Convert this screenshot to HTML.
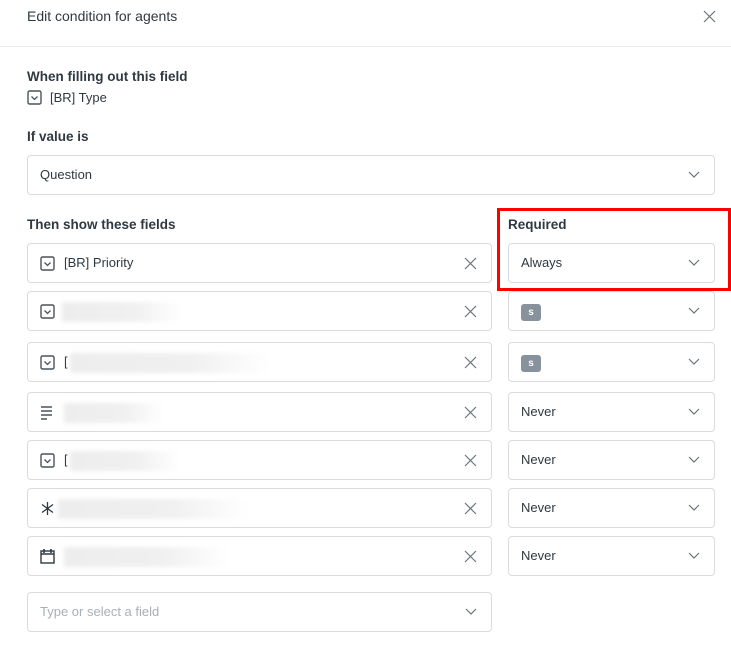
<!DOCTYPE html>
<html><head><meta charset="utf-8"><style>
*{box-sizing:border-box;margin:0;padding:0}
body{width:731px;height:670px;background:#fff;font-family:"Liberation Sans",sans-serif;font-size:13px;color:#2f3941;position:relative;overflow:hidden}
.a{position:absolute}
.box{position:absolute;border:1px solid #d8dcde;border-radius:4px;background:#fff;height:40px}
.t{position:absolute;top:11px;white-space:nowrap}
.lbl{position:absolute;font-weight:600;color:#2f3941;font-size:13.5px}
.x{position:absolute;right:14px;top:13px}
.chev{position:absolute;right:14px;top:15px}
.ic{position:absolute;left:12px;top:12px}
.blur{position:absolute;top:10px;height:20px;background:linear-gradient(90deg,#ededee,#f0f0f1 60%,#fff);filter:blur(2px)}
.s{position:absolute;left:12px;top:12px;width:20px;height:17px;background:#87929d;border-radius:3px;color:#fff;font-size:10px;font-weight:bold;text-align:center;line-height:17px}
</style></head><body>
<div class="a" style="left:27px;top:8px;font-size:14px">Edit condition for agents</div>
<svg class="a" style="left:703px;top:10px" width="13" height="13"><path d="M1 1L12 12M12 1L1 12" stroke="#68737d" stroke-width="1.2"/></svg>
<div class="a" style="left:0;top:46px;width:731px;height:1px;background:#e9ebed"></div>
<div class="lbl" style="left:27px;top:69px">When filling out this field</div>
<svg class="a" style="left:27px;top:90px" width="15" height="15"><rect x="1" y="1" width="13" height="13" rx="1.5" fill="none" stroke="#49545c" stroke-width="1.4"/><path d="M4.5 6.5L7.5 9.5L10.5 6.5" fill="none" stroke="#49545c" stroke-width="1.3"/></svg>
<div class="a" style="left:50px;top:90px">[BR] Type</div>
<div class="lbl" style="left:27px;top:129px">If value is</div>
<div class="box" style="left:27px;top:155px;width:688px"><span class="t" style="left:12px">Question</span><svg class="chev" width="12" height="8"><path d="M1 1L6 6L11 1" fill="none" stroke="#68737d" stroke-width="1.2"/></svg></div>
<div class="lbl" style="left:27px;top:217px">Then show these fields</div>
<div class="lbl" style="left:508px;top:217px">Required</div>

<div class="box" style="left:27px;top:243px;width:465px"><svg class="ic" width="15" height="15"><rect x="1" y="1" width="13" height="13" rx="1.5" fill="none" stroke="#49545c" stroke-width="1.4"/><path d="M4.5 6.5L7.5 9.5L10.5 6.5" fill="none" stroke="#49545c" stroke-width="1.3"/></svg><span class="t" style="left:36px">[BR] Priority</span><svg class="x" width="13" height="13"><path d="M1 1L12 12M12 1L1 12" stroke="#68737d" stroke-width="1.2"/></svg></div>
<div class="box" style="left:508px;top:243px;width:207px"><span class="t" style="left:12px">Always</span><svg class="chev" width="12" height="8"><path d="M1 1L6 6L11 1" fill="none" stroke="#68737d" stroke-width="1.2"/></svg></div>

<div class="box" style="left:27px;top:291px;width:465px"><svg class="ic" width="15" height="15"><rect x="1" y="1" width="13" height="13" rx="1.5" fill="none" stroke="#49545c" stroke-width="1.4"/><path d="M4.5 6.5L7.5 9.5L10.5 6.5" fill="none" stroke="#49545c" stroke-width="1.3"/></svg><div class="blur" style="left:34px;width:120px"></div><svg class="x" width="13" height="13"><path d="M1 1L12 12M12 1L1 12" stroke="#68737d" stroke-width="1.2"/></svg></div>
<div class="box" style="left:508px;top:291px;width:207px"><div class="s">s</div><svg class="chev" width="12" height="8"><path d="M1 1L6 6L11 1" fill="none" stroke="#68737d" stroke-width="1.2"/></svg></div>

<div class="box" style="left:27px;top:342px;width:465px"><svg class="ic" width="15" height="15"><rect x="1" y="1" width="13" height="13" rx="1.5" fill="none" stroke="#49545c" stroke-width="1.4"/><path d="M4.5 6.5L7.5 9.5L10.5 6.5" fill="none" stroke="#49545c" stroke-width="1.3"/></svg><span class="t" style="left:36px">[</span><div class="blur" style="left:42px;width:200px"></div><svg class="x" width="13" height="13"><path d="M1 1L12 12M12 1L1 12" stroke="#68737d" stroke-width="1.2"/></svg></div>
<div class="box" style="left:508px;top:342px;width:207px"><div class="s">s</div><svg class="chev" width="12" height="8"><path d="M1 1L6 6L11 1" fill="none" stroke="#68737d" stroke-width="1.2"/></svg></div>

<div class="box" style="left:27px;top:392px;width:465px"><svg class="ic" width="15" height="15"><path d="M1 2H12M1 6H12M1 10H12M1 14H7" stroke="#49545c" stroke-width="1.5"/></svg><div class="blur" style="left:36px;width:100px"></div><svg class="x" width="13" height="13"><path d="M1 1L12 12M12 1L1 12" stroke="#68737d" stroke-width="1.2"/></svg></div>
<div class="box" style="left:508px;top:392px;width:207px"><span class="t" style="left:12px">Never</span><svg class="chev" width="12" height="8"><path d="M1 1L6 6L11 1" fill="none" stroke="#68737d" stroke-width="1.2"/></svg></div>

<div class="box" style="left:27px;top:440px;width:465px"><svg class="ic" width="15" height="15"><rect x="1" y="1" width="13" height="13" rx="1.5" fill="none" stroke="#49545c" stroke-width="1.4"/><path d="M4.5 6.5L7.5 9.5L10.5 6.5" fill="none" stroke="#49545c" stroke-width="1.3"/></svg><span class="t" style="left:36px">[</span><div class="blur" style="left:42px;width:110px"></div><svg class="x" width="13" height="13"><path d="M1 1L12 12M12 1L1 12" stroke="#68737d" stroke-width="1.2"/></svg></div>
<div class="box" style="left:508px;top:440px;width:207px"><span class="t" style="left:12px">Never</span><svg class="chev" width="12" height="8"><path d="M1 1L6 6L11 1" fill="none" stroke="#68737d" stroke-width="1.2"/></svg></div>

<div class="box" style="left:27px;top:488px;width:465px"><svg class="ic" width="15" height="15"><path d="M7.5 1V14M2 3.5L13 11.5M13 3.5L2 11.5" stroke="#2f3941" stroke-width="1.3"/></svg><div class="blur" style="left:30px;width:190px"></div><svg class="x" width="13" height="13"><path d="M1 1L12 12M12 1L1 12" stroke="#68737d" stroke-width="1.2"/></svg></div>
<div class="box" style="left:508px;top:488px;width:207px"><span class="t" style="left:12px">Never</span><svg class="chev" width="12" height="8"><path d="M1 1L6 6L11 1" fill="none" stroke="#68737d" stroke-width="1.2"/></svg></div>

<div class="box" style="left:27px;top:536px;width:465px"><svg class="ic" style="top:11px" width="15" height="17"><rect x="1" y="3" width="13" height="12" fill="none" stroke="#2f3941" stroke-width="1.4"/><path d="M1 6H14M4 1V5M11 1V5" stroke="#2f3941" stroke-width="1.6"/></svg><div class="blur" style="left:36px;width:165px"></div><svg class="x" width="13" height="13"><path d="M1 1L12 12M12 1L1 12" stroke="#68737d" stroke-width="1.2"/></svg></div>
<div class="box" style="left:508px;top:536px;width:207px"><span class="t" style="left:12px">Never</span><svg class="chev" width="12" height="8"><path d="M1 1L6 6L11 1" fill="none" stroke="#68737d" stroke-width="1.2"/></svg></div>

<div class="box" style="left:27px;top:592px;width:465px"><span class="t" style="left:12px;color:#a8b0b6">Type or select a field</span><svg class="chev" width="12" height="8"><path d="M1 1L6 6L11 1" fill="none" stroke="#68737d" stroke-width="1.2"/></svg></div>

<div class="a" style="left:497px;top:208px;width:234px;height:83px;border:3px solid #f00"></div>
</body></html>
